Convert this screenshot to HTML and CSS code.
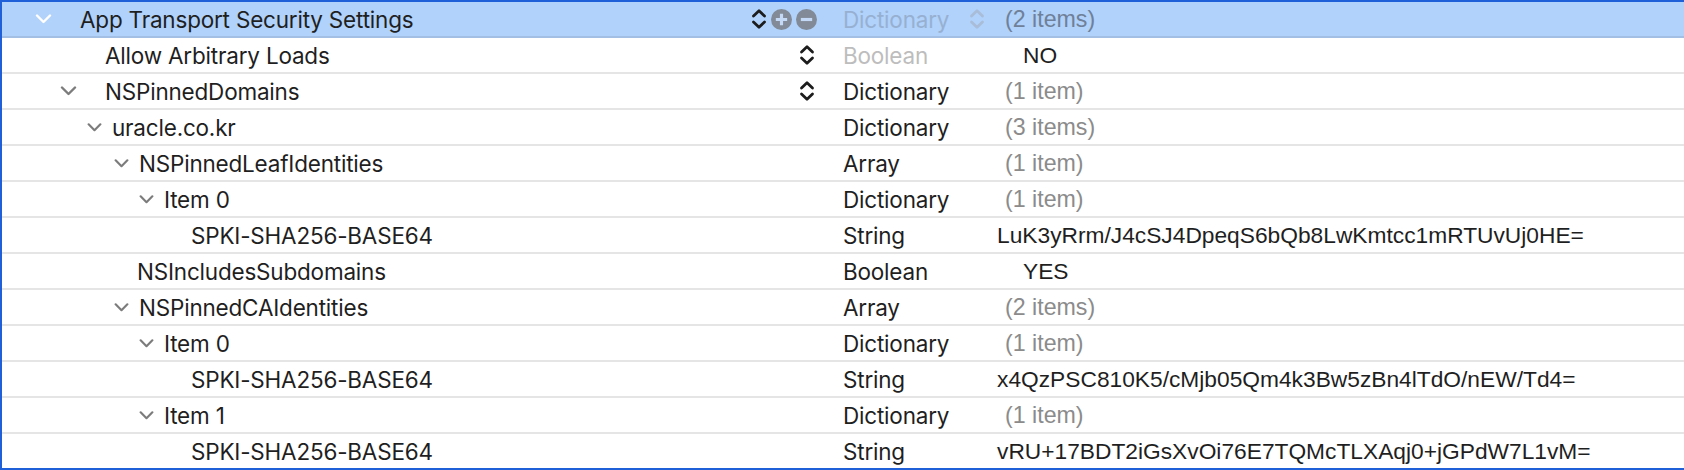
FILE: index.html
```html
<!DOCTYPE html>
<html>
<head>
<meta charset="utf-8">
<link rel="stylesheet" href="styles.css">
</head>
<body>
<svg width="0" height="0" class="defs">
  <defs>
    <symbol id="updown" viewBox="0 0 16 22">
      <path d="M2.5 8 L8 2.8 L13.5 8" fill="none" stroke="currentColor" stroke-width="2.8" stroke-linecap="round" stroke-linejoin="round"/>
      <path d="M2.5 14 L8 19.2 L13.5 14" fill="none" stroke="currentColor" stroke-width="2.8" stroke-linecap="round" stroke-linejoin="round"/>
    </symbol>
    <symbol id="chev" viewBox="0 0 16 10">
      <path d="M1.5 1.5 L8 8 L14.5 1.5" fill="none" stroke="currentColor" stroke-width="2.4" stroke-linecap="round" stroke-linejoin="round"/>
    </symbol>
  </defs>
</svg>
<div class="plist">
  <div class="row header">
    <div class="key lv0"><svg class="chev big"><use href="#chev"/></svg><span class="name">App Transport Security Settings</span>
      <span class="controls">
        <svg class="updown"><use href="#updown"/></svg>
        <svg class="circ" viewBox="0 0 20 20"><circle cx="10" cy="10" r="10" fill="#818a96"/><path d="M10 4.6V15.4M4.6 10H15.4" stroke="#c4d9f5" stroke-width="3"/></svg>
        <svg class="circ" viewBox="0 0 20 20"><circle cx="10" cy="10" r="10" fill="#818a96"/><path d="M4.6 10H15.4" stroke="#c4d9f5" stroke-width="3"/></svg>
      </span>
    </div>
    <div class="type dim-blue">Dictionary<svg class="updown light"><use href="#updown"/></svg></div>
    <div class="value count">(2 items)</div>
  </div>
  <div class="row">
    <div class="key lv1"><span class="name">Allow Arbitrary Loads</span><span class="controls"><svg class="updown"><use href="#updown"/></svg></span></div>
    <div class="type disabled">Boolean</div>
    <div class="value bool">NO</div>
  </div>
  <div class="row">
    <div class="key lv1"><svg class="chev big"><use href="#chev"/></svg><span class="name">NSPinnedDomains</span><span class="controls"><svg class="updown"><use href="#updown"/></svg></span></div>
    <div class="type">Dictionary</div>
    <div class="value count">(1 item)</div>
  </div>
  <div class="row">
    <div class="key lv2"><svg class="chev"><use href="#chev"/></svg><span class="name">uracle.co.kr</span></div>
    <div class="type">Dictionary</div>
    <div class="value count">(3 items)</div>
  </div>
  <div class="row">
    <div class="key lv3"><svg class="chev"><use href="#chev"/></svg><span class="name">NSPinnedLeafIdentities</span></div>
    <div class="type">Array</div>
    <div class="value count">(1 item)</div>
  </div>
  <div class="row">
    <div class="key lv4"><svg class="chev"><use href="#chev"/></svg><span class="name">Item 0</span></div>
    <div class="type">Dictionary</div>
    <div class="value count">(1 item)</div>
  </div>
  <div class="row">
    <div class="key lv5"><span class="name">SPKI-SHA256-BASE64</span></div>
    <div class="type">String</div>
    <div class="value">LuK3yRrm/J4cSJ4DpeqS6bQb8LwKmtcc1mRTUvUj0HE=</div>
  </div>
  <div class="row">
    <div class="key lv3 leaf"><span class="name">NSIncludesSubdomains</span></div>
    <div class="type">Boolean</div>
    <div class="value bool">YES</div>
  </div>
  <div class="row">
    <div class="key lv3"><svg class="chev"><use href="#chev"/></svg><span class="name">NSPinnedCAIdentities</span></div>
    <div class="type">Array</div>
    <div class="value count">(2 items)</div>
  </div>
  <div class="row">
    <div class="key lv4"><svg class="chev"><use href="#chev"/></svg><span class="name">Item 0</span></div>
    <div class="type">Dictionary</div>
    <div class="value count">(1 item)</div>
  </div>
  <div class="row">
    <div class="key lv5"><span class="name">SPKI-SHA256-BASE64</span></div>
    <div class="type">String</div>
    <div class="value">x4QzPSC810K5/cMjb05Qm4k3Bw5zBn4lTdO/nEW/Td4=</div>
  </div>
  <div class="row">
    <div class="key lv4"><svg class="chev"><use href="#chev"/></svg><span class="name">Item 1</span></div>
    <div class="type">Dictionary</div>
    <div class="value count">(1 item)</div>
  </div>
  <div class="row last">
    <div class="key lv5"><span class="name">SPKI-SHA256-BASE64</span></div>
    <div class="type">String</div>
    <div class="value">vRU+17BDT2iGsXvOi76E7TQMcTLXAqj0+jGPdW7L1vM=</div>
  </div>
</div>
</body>
</html>
```
FILE: styles.css
```css
html, body {
  margin: 0;
  padding: 0;
  background: #ffffff;
}
.defs {
  position: absolute;
  width: 0;
  height: 0;
}
.plist {
  width: 1682px;
  height: 466px;
  border-left: 2px solid #1f5fd7;
  border-top: 2px solid #1f5fd7;
  border-bottom: 2px solid #1f5fd7;
  font-family: Inter, "Noto Sans", sans-serif;
  font-size: 22.5px;
  letter-spacing: -0.2px;
  color: #1f1f1f;
  overflow: hidden;
}
.row {
  display: grid;
  grid-template-columns: 818px 170px 1fr;
  height: 34px;
  align-items: center;
  border-bottom: 2px solid #e5e5e5;
}
.row.last {
  border-bottom: none;
}
.row.header {
  background: #b0d2fb;
  border-bottom: 2px solid #a3c0e4;
}
.key {
  display: flex;
  align-items: center;
  height: 34px;
  white-space: nowrap;
}
.chev {
  width: 16px;
  height: 10px;
  color: #7c7c7c;
  flex: none;
}
.chev.big {
  width: 17px;
  height: 10px;
}
.header .chev {
  color: #ffffff;
}
.lv0 { padding-left: 33px; }
.lv0 .chev { margin-right: 28px; }
.lv1 { padding-left: 103px; }
.lv1 .chev { margin-left: -45px; margin-right: 28px; }
.lv2 { padding-left: 85px; }
.lv3 { padding-left: 112px; }
.lv4 { padding-left: 137px; }
.lv2 .chev, .lv3 .chev, .lv4 .chev { width: 15px; height: 9px; margin-right: 10px; }
.lv3.leaf { padding-left: 135px; }
.lv5 { padding-left: 189px; }
.controls {
  margin-left: auto;
  display: flex;
  align-items: center;
  gap: 4px;
}
.header .controls {
  margin-right: 3px;
}
.row:not(.header) .controls {
  margin-right: 5px;
}
.updown {
  width: 16px;
  height: 22px;
  color: #1c1c1c;
  flex: none;
}
.updown.light {
  color: #a9bdd8;
  margin-left: 20px;
}
.circ {
  width: 21px;
  height: 21px;
}
.type {
  display: flex;
  align-items: center;
  padding-left: 23px;
}
.type.disabled {
  color: #bdbdbd;
}
.type.dim-blue {
  color: #97b0d1;
}
.value {
  font-family: "Liberation Sans", Arial, sans-serif;
  font-size: 22.75px;
  letter-spacing: 0;
  padding-left: 7px;
  white-space: nowrap;
}
.value.count {
  font-size: 23.2px;
  padding-left: 15px;
  color: #8b8b8b;
}
.header .value.count {
  color: #6f8098;
}
.value.bool {
  padding-left: 33px;
}
```
